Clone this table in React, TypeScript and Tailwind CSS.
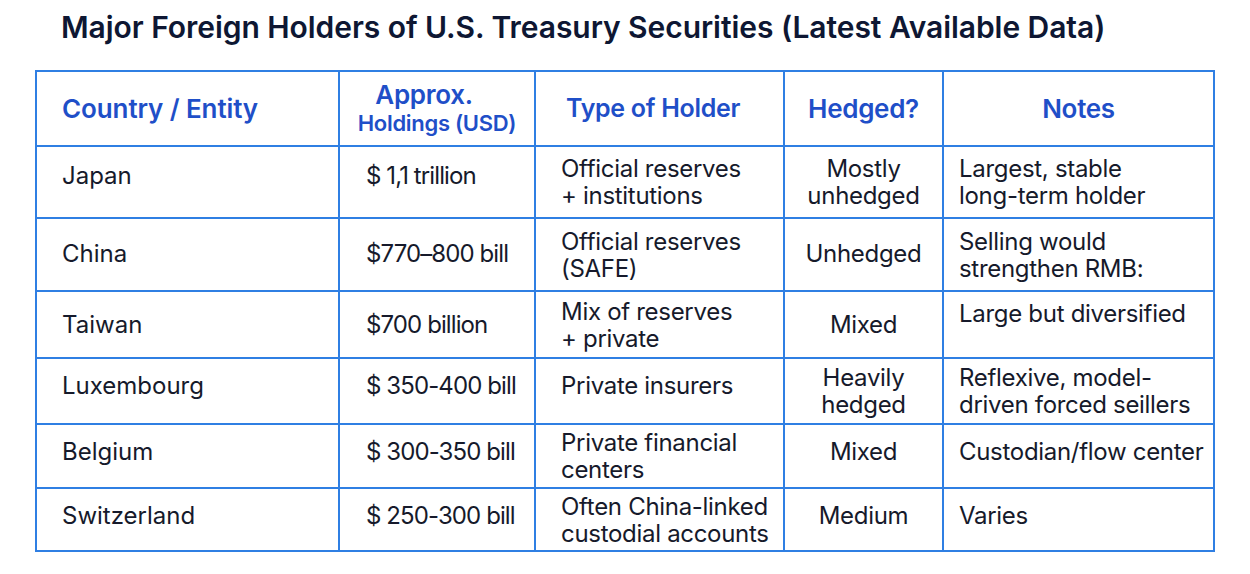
import React from "react";

type Row = {
  country: string;
  holdings: string;
  type: string[];
  hedged: string[];
  notes: string[];
  h: string;
  pb: string;
  notesTop?: boolean;
};

const rows: Row[] = [
  { country: "Japan", holdings: "$ 1,1 trillion", type: ["Official reserves", "+ institutions"], hedged: ["Mostly", "unhedged"], notes: ["Largest, stable", "long-term holder"], h: "h-[72px]", pb: "pb-[14px]" },
  { country: "China", holdings: "$770–800 bill", type: ["Official reserves", "(SAFE)"], hedged: ["Unhedged"], notes: ["Selling would", "strengthen RMB:"], h: "h-[73px]", pb: "pb-[2px]" },
  { country: "Taiwan", holdings: "$700 billion", type: ["Mix of reserves", "+ private"], hedged: ["Mixed"], notes: ["Large but diversified"], h: "h-[67px]", pb: "pb-0", notesTop: true },
  { country: "Luxembourg", holdings: "$ 350-400 bill", type: ["Private insurers"], hedged: ["Heavily", "hedged"], notes: ["Reflexive, model-", "driven forced seillers"], h: "h-[66px]", pb: "pb-[12px]" },
  { country: "Belgium", holdings: "$ 300-350 bill", type: ["Private financial", "centers"], hedged: ["Mixed"], notes: ["Custodian/flow center"], h: "h-[64px]", pb: "pb-[10px]" },
  { country: "Switzerland", holdings: "$ 250-300 bill", type: ["Often China-linked", "custodial accounts"], hedged: ["Medium"], notes: ["Varies"], h: "h-[63px]", pb: "pb-[8px]" },
];

const cellB = "border-2 border-[#2f7fe3]";

function Lines({ lines }: { lines: string[] }) {
  return (
    <>
      {lines.map((l, i) => (
        <div key={i} className="whitespace-nowrap">{l}</div>
      ))}
    </>
  );
}

export default function App() {
  return (
    <div className="w-[1250px] h-[574px] bg-white overflow-hidden" style={{ fontFamily: "Inter, 'Noto Sans', sans-serif" }}>
      <div className="pt-[8px] pl-[61px] text-[30px] leading-[38px] font-semibold text-[#0e1733] tracking-[-0.05px] whitespace-nowrap">
        Major Foreign Holders of U.S. Treasury Securities (Latest Available Data)
      </div>
      <div className="pl-[35px] pt-[24px]">
        <table className="table-fixed border-collapse w-[1178px] text-[#161a2b]">
          <colgroup>
            <col className="w-[303px]" />
            <col className="w-[196px]" />
            <col className="w-[249px]" />
            <col className="w-[159px]" />
            <col className="w-[271px]" />
          </colgroup>
          <thead>
            <tr className="h-[75px] text-[#1f4fc8]">
              <th className={`${cellB} text-left pl-[25px] text-[26px] font-semibold tracking-[-0.1px]`}>Country / Entity</th>
              <th className={`${cellB} text-center font-semibold`}>
                <div className="text-[26px] leading-[28px] pr-[26px] tracking-[-0.3px]">Approx.</div>
                <div className="text-[22px] leading-[28px] tracking-[-0.3px] whitespace-nowrap">Holdings (USD)</div>
              </th>
              <th className={`${cellB} text-left pl-[30px] text-[25px] font-semibold tracking-[-0.3px]`}>Type of Holder</th>
              <th className={`${cellB} text-center text-[26px] font-semibold tracking-[-0.3px]`}>Hedged?</th>
              <th className={`${cellB} text-center text-[26px] font-semibold tracking-[-0.3px]`}>Notes</th>
            </tr>
          </thead>
          <tbody className="text-[24px] leading-[27px]">
            {rows.map((r) => (
              <tr key={r.country} className={r.h}>
                <td className={`${cellB} pl-[25px] ${r.pb}`}>{r.country}</td>
                <td className={`${cellB} pl-[26px] ${r.pb} tracking-[-0.9px] whitespace-nowrap`}>{r.holdings}</td>
                <td className={`${cellB} pl-[25px] tracking-[-0.3px] ${r.type.length === 1 ? r.pb : ""}`}>
                  <Lines lines={r.type} />
                </td>
                <td className={`${cellB} text-center tracking-[-0.3px] ${r.hedged.length === 1 ? r.pb : ""}`}>
                  <Lines lines={r.hedged} />
                </td>
                <td className={`${cellB} pl-[15px] tracking-[-0.3px] ${r.notesTop ? "align-top pt-[8px]" : r.notes.length === 1 ? r.pb : ""}`}>
                  <Lines lines={r.notes} />
                </td>
              </tr>
            ))}
          </tbody>
        </table>
      </div>
    </div>
  );
}
